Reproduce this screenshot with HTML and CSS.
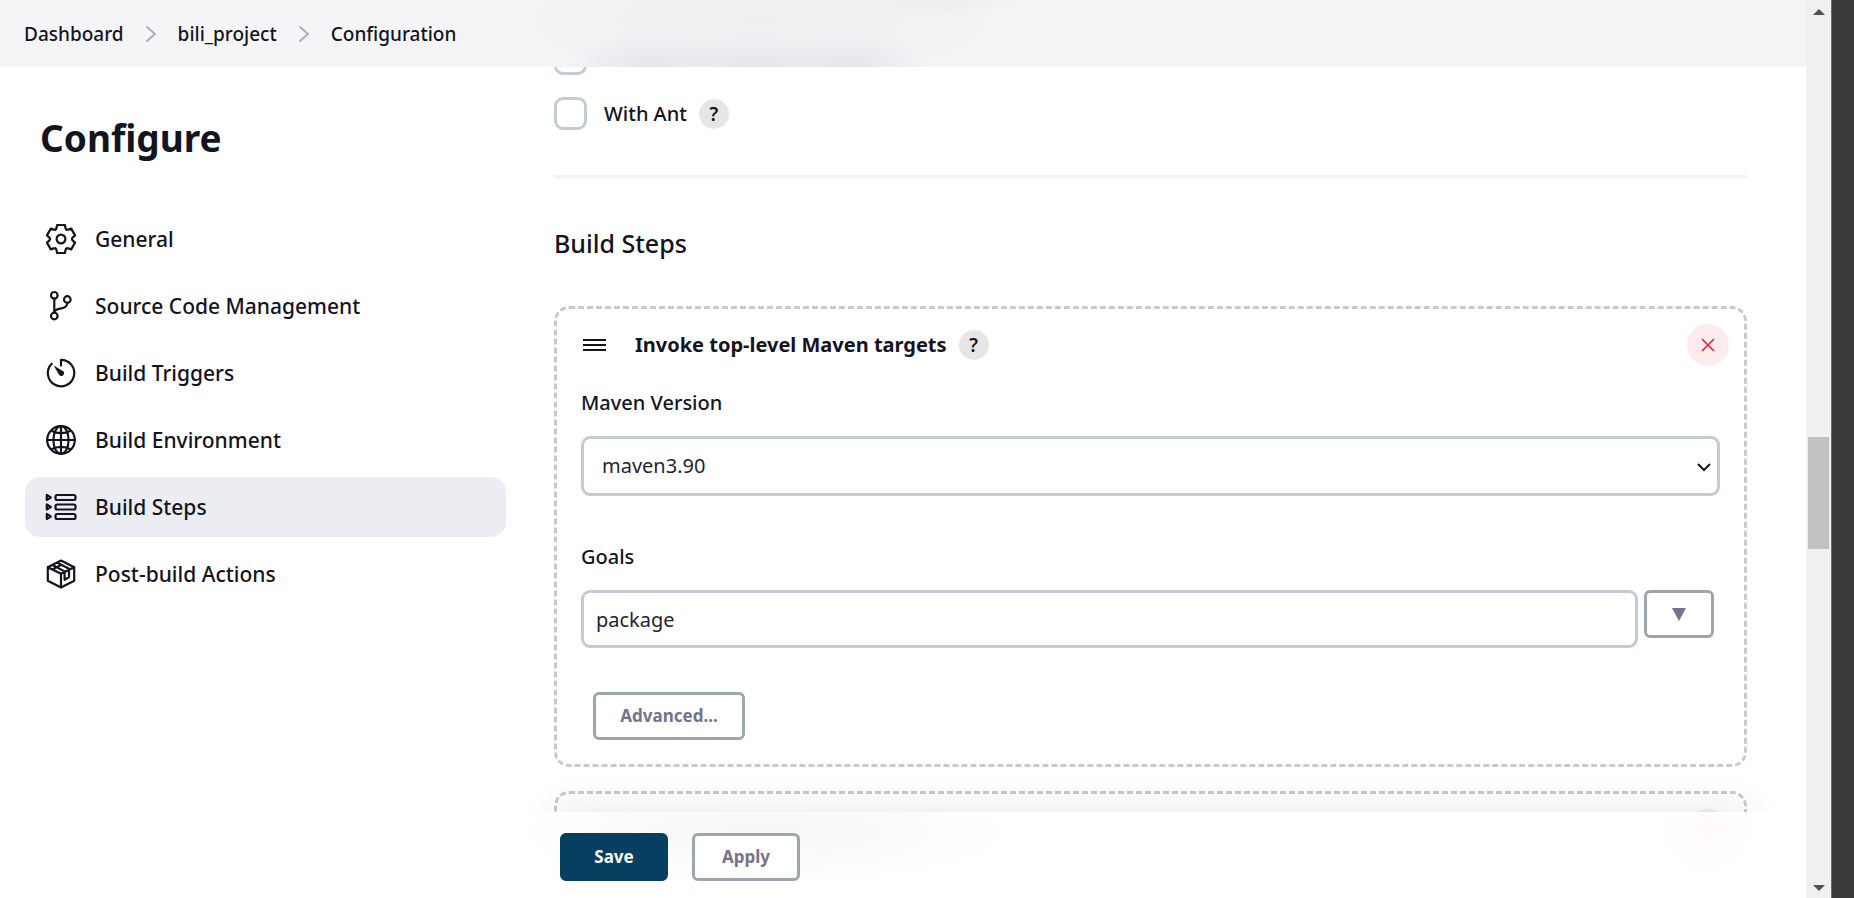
FILE: index.html
```html
<!DOCTYPE html>
<html lang="en">
<head>
<meta charset="utf-8">
<title>bili_project Config</title>
<link rel="stylesheet" href="styles.css">
</head>
<body>
<div class="window">
  <div class="app">
    <header class="topbar">
      <nav class="crumbs" aria-label="Breadcrumb">
        <a href="#">Dashboard</a>
        <svg class="crumb-sep" viewBox="0 0 12 18" aria-hidden="true"><path d="M2 2l8 7-8 7"/></svg>
        <a href="#">bili_project</a>
        <svg class="crumb-sep" viewBox="0 0 12 18" aria-hidden="true"><path d="M2 2l8 7-8 7"/></svg>
        <a href="#">Configuration</a>
      </nav>
    </header>

    <aside class="side">
      <h1 class="side-title">Configure</h1>
      <nav class="tasks">
        <a class="task" href="#general">
          <svg class="task-icon" viewBox="-16 -16 32 32" aria-hidden="true">
            <defs><path id="tooth" d="M-5.5 -9.5Q-4.7 -9.9 -4.5 -11L-3.9 -14H3.9L4.5 -11Q4.7 -9.9 5.5 -9.5"/></defs>
            <use href="#tooth"/><use href="#tooth" transform="rotate(60)"/><use href="#tooth" transform="rotate(120)"/>
            <use href="#tooth" transform="rotate(180)"/><use href="#tooth" transform="rotate(240)"/><use href="#tooth" transform="rotate(300)"/>
            <circle r="4.4"/>
          </svg>
          General</a>
        <a class="task" href="#scm">
          <svg class="task-icon" viewBox="0 0 32 32" aria-hidden="true">
            <circle cx="9.3" cy="5.3" r="3.3"/><circle cx="9.3" cy="26" r="3.3"/><circle cx="22.3" cy="9.5" r="3.3"/>
            <path d="M9.3 8.6v14.1M22.3 12.8c0 8-13 4-13 9.8"/>
          </svg>
          Source Code Management</a>
        <a class="task" href="#triggers">
          <svg class="task-icon" viewBox="0 0 32 32" aria-hidden="true">
            <path d="M16 8.6V2.8A13.2 13.2 0 1 1 6.7 6.7"/>
            <path class="solid" d="M8.600 8.600l9.600 5.600a2.600 2.600 0 1 1-4 3.900z"/>
          </svg>
          Build Triggers</a>
        <a class="task" href="#environment">
          <svg class="task-icon" viewBox="0 0 32 32" aria-hidden="true">
            <circle cx="16" cy="16" r="13.800"/><ellipse cx="16" cy="16" rx="7.6" ry="13.800"/>
            <path d="M16 2v28M2 16h28M6.500 6.800c5.500 3.200 13.500 3.200 19 0M6.500 25.200c5.500-3.200 13.500-3.200 19 0"/>
          </svg>
          Build Environment</a>
        <a class="task task-active" href="#steps" aria-current="true">
          <svg class="task-icon" viewBox="0 0 32 32" aria-hidden="true">
            <rect x="10.500" y="4" width="20" height="5" rx="1.800"/><rect x="10.500" y="13.500" width="20" height="5" rx="1.800"/><rect x="10.500" y="23" width="20" height="5" rx="1.800"/>
            <path d="M1.800 4v5l4-2.500zM1.800 13.500v5l4-2.500zM1.800 23v5l4-2.500z"/>
          </svg>
          Build Steps</a>
        <a class="task" href="#postbuild">
          <svg class="task-icon" viewBox="0 0 32 32" aria-hidden="true">
            <path d="M16 2.500L29.200 9.200V22.800L16 29.600 2.800 22.800V9.200zM2.800 9.200L16 15.800V29.600M16 15.800L29.200 9.200M12 4.600l13 6.600M7.500 7l12.500 6.600M7.200 11.600l8.600-4.600M19.600 14.200v7.600l4.400-2.600v-7.400"/>
          </svg>
          Post-build Actions</a>
      </nav>
    </aside>

    <main class="content">
      <div class="check-row"><input class="check" type="checkbox" aria-label="Previous option"></div>
      <div class="check-row">
        <input class="check" type="checkbox" id="with-ant">
        <label for="with-ant">With Ant</label>
        <button class="help" type="button">?</button>
      </div>
      <hr class="divider">
      <h2 class="section-title">Build Steps</h2>

      <section class="step">
        <div class="step-head">
          <svg class="drag" viewBox="0 0 24 14" aria-hidden="true"><path d="M0 2h23M0 7h23M0 12h23"/></svg>
          <h3 class="step-title">Invoke top-level Maven targets</h3>
          <button class="help" type="button">?</button>
          <button class="remove" type="button" aria-label="Delete step">
            <svg class="remove-icon" viewBox="0 0 14 14" aria-hidden="true"><path d="M1 1l12 12M13 1L1 13"/></svg>
          </button>
        </div>
        <div class="field">
          <label class="field-label" for="maven">Maven Version</label>
          <div class="select-wrap">
            <select class="select" id="maven"><option>maven3.90</option></select>
            <svg class="select-arrow" viewBox="0 0 14 10" aria-hidden="true"><path d="M1 2l6 6 6-6"/></svg>
          </div>
        </div>
        <div class="field">
          <label class="field-label" for="goals">Goals</label>
          <div class="input-row">
            <input class="input" id="goals" type="text" value="package">
            <button class="btn btn-expand" type="button" aria-label="Expand">
              <svg class="expand-icon" viewBox="0 0 14 13" aria-hidden="true"><path d="M0 0h14L7 13z"/></svg>
            </button>
          </div>
        </div>
        <button class="btn btn-advanced" type="button">Advanced...</button>
      </section>

      <section class="step step-next">
        <div class="step-head">
          <button class="remove" type="button" aria-label="Delete step"></button>
        </div>
      </section>
    </main>

    <footer class="actions">
      <div class="actions-bar">
        <button class="btn btn-primary" type="submit">Save</button>
        <button class="btn" type="button">Apply</button>
      </div>
    </footer>
  </div>

  <div class="scrollbar" aria-hidden="true">
    <svg class="scroll-arrow" viewBox="0 0 12 6"><path d="M6 0l6 6H0z"/></svg>
    <div class="track"><div class="thumb"></div></div>
    <svg class="scroll-arrow" viewBox="0 0 12 6"><path d="M0 0h12L6 6z"/></svg>
  </div>
  <div class="edge"></div>
</div>
</body>
</html>
```
FILE: styles.css
```css
* { box-sizing: border-box; }

body {
  margin: 0;
  background: #fff;
  color: #14141f;
  font-family: "Segoe UI", "Noto Sans", sans-serif;
  font-size: 21px;
  font-weight: 500;
  line-height: 30px;
}

button, input, select { font: inherit; color: inherit; margin: 0; }
a { color: inherit; text-decoration: none; }
svg { display: block; flex: none; }

.window { display: flex; height: 100vh; overflow: hidden; }

.app {
  position: relative;
  flex: 1;
  display: flex;
  min-width: 0;
  overflow: hidden;
}

/* Breadcrumb bar */
.topbar {
  position: absolute;
  inset: 0 0 auto;
  z-index: 2;
  padding: 19px 24px 18px;
  background:
    radial-gradient(80px 34px at 650px 100%, #e6e6ea, transparent),
    radial-gradient(90px 34px at 755px 100%, #e6e6ea, transparent),
    radial-gradient(80px 34px at 850px 100%, #e6e6ea, transparent),
    radial-gradient(80px 16px at 940px 0, #ececef, transparent),
    radial-gradient(330px 90px at 760px 20px, #efeff2, transparent),
    #f5f5f8;
}
.crumbs { display: flex; align-items: center; gap: 21px; font-size: 19px; }
.crumb-sep { width: 12px; height: 18px; fill: none; stroke: #aeaebb; stroke-width: 2; stroke-linecap: round; stroke-linejoin: round; }

/* Side navigation */
.side { flex: none; width: 506px; padding: 114px 0 0 25px; }
.side-title { margin: 0 0 47px 15px; font-size: 37px; font-weight: 700; line-height: 48px; }
.tasks { display: flex; flex-direction: column; gap: 7px; }
.task { display: flex; align-items: center; gap: 18px; height: 60px; padding: 0 20px; border-radius: 15px; }
.task-active { background: #ecedf3; }
.task-icon { width: 32px; height: 32px; fill: none; stroke: #14141f; stroke-width: 2.2; stroke-linecap: round; stroke-linejoin: round; }
.task-icon .solid { fill: #14141f; stroke: none; }

/* Form */
.content { flex: 1; min-width: 0; padding: 42px 59px 0 48px; }
.check-row { display: flex; align-items: center; height: 33px; margin-bottom: 22px; font-size: 20px; }
.check { appearance: none; width: 33px; height: 33px; margin-right: 17px; border: 3px solid #c3ccd1; border-radius: 9px; background: #fff; }
.help { width: 30px; height: 30px; margin-left: 12px; padding: 0; border: 0; border-radius: 50%; background: #e6e6e6; font-size: 19px; font-weight: 600; line-height: 30px; text-align: center; }
.divider { height: 3px; margin: 45px 0 47px; border: 0; background: #f2f2f7; }
.section-title { margin: 0 0 45px; font-size: 25px; font-weight: 500; line-height: 36px; }

.step { padding: 15px 24px 24px; margin-bottom: 24px; border: 3px dashed #c3ccd1; border-radius: 15px; }
.step-next { height: 160px; }
.step-head { display: flex; align-items: center; height: 42px; margin-bottom: 22px; }
.drag { width: 24px; height: 14px; margin: 0 28px 0 2px; stroke: #14141f; stroke-width: 2; }
.step-title { margin: 0; font-size: 20px; font-weight: 700; line-height: 30px; }
.remove { display: flex; align-items: center; justify-content: center; width: 42px; height: 42px; margin: 0 -9px 0 auto; padding: 0; border: 0; border-radius: 50%; background: #fdebed; }
.remove-icon { width: 14px; height: 14px; fill: none; stroke: #e6203a; stroke-width: 1.6; }

.field { margin-bottom: 46px; }
.field + .field { margin-bottom: 44px; }
.field-label { display: block; margin-bottom: 18px; font-size: 20px; line-height: 30px; }
.select-wrap { position: relative; }
.select, .input { width: 100%; border: 3px solid #c3ccd1; border-radius: 9px; background: #fff; color: #24242f; font-size: 20px; font-weight: 400; }
.select { appearance: none; height: 60px; padding: 0 18px; }
.select-arrow { position: absolute; top: 26px; right: 9px; width: 14px; height: 10px; fill: none; stroke: #14141f; stroke-width: 2; pointer-events: none; }
.input { flex: 1; min-width: 0; height: 58px; padding: 0 12px; }
.input-row { display: flex; align-items: flex-start; gap: 6px; padding-right: 6px; }

.btn { height: 48px; padding: 0 24px; border: 3px solid #9aa7af; border-radius: 6px; background: #fff; color: #75738c; font-size: 17px; font-weight: 700; line-height: 24px; }
.btn-expand { display: flex; align-items: center; justify-content: center; width: 70px; padding: 0; }
.expand-icon { width: 14px; height: 13px; fill: #75738c; }
.btn-advanced { display: block; width: 152px; margin-left: 12px; }

/* Sticky action bar; its shadow shows only above the bar */
.actions { position: absolute; inset: auto 0 0 506px; }
.actions::before {
  content: "";
  position: absolute;
  inset: 0 59px 0 48px;
  box-shadow: 0 0 45px rgba(0, 0, 0, .1);
}
.actions-bar {
  position: relative;
  display: flex;
  gap: 24px;
  padding: 21px 54px 17px;
  background:
    radial-gradient(260px 55px at 258px 20px, #f7f7f7, transparent),
    radial-gradient(50px 50px at 1202px 16px, #fefafa, transparent),
    #fff;
}
.actions .btn { width: 108px; }
.actions .btn-primary { border-color: #073f61; background: #073f61; color: #fff; }

/* Window scrollbar and edge */
.scrollbar { flex: none; display: flex; flex-direction: column; align-items: center; justify-content: space-between; width: 25px; padding: 9px 0 7px; background: #f0f0f0; }
.scroll-arrow { width: 12px; height: 6px; fill: #505050; }
.track { flex: 1; display: flex; flex-direction: column; padding-top: 422px; }
.thumb { width: 21px; height: 112px; background: #c1c1c1; }
.edge { flex: none; width: 23px; border-left: 1px solid #6a6a6a; background: #3a3a3a; }
```
